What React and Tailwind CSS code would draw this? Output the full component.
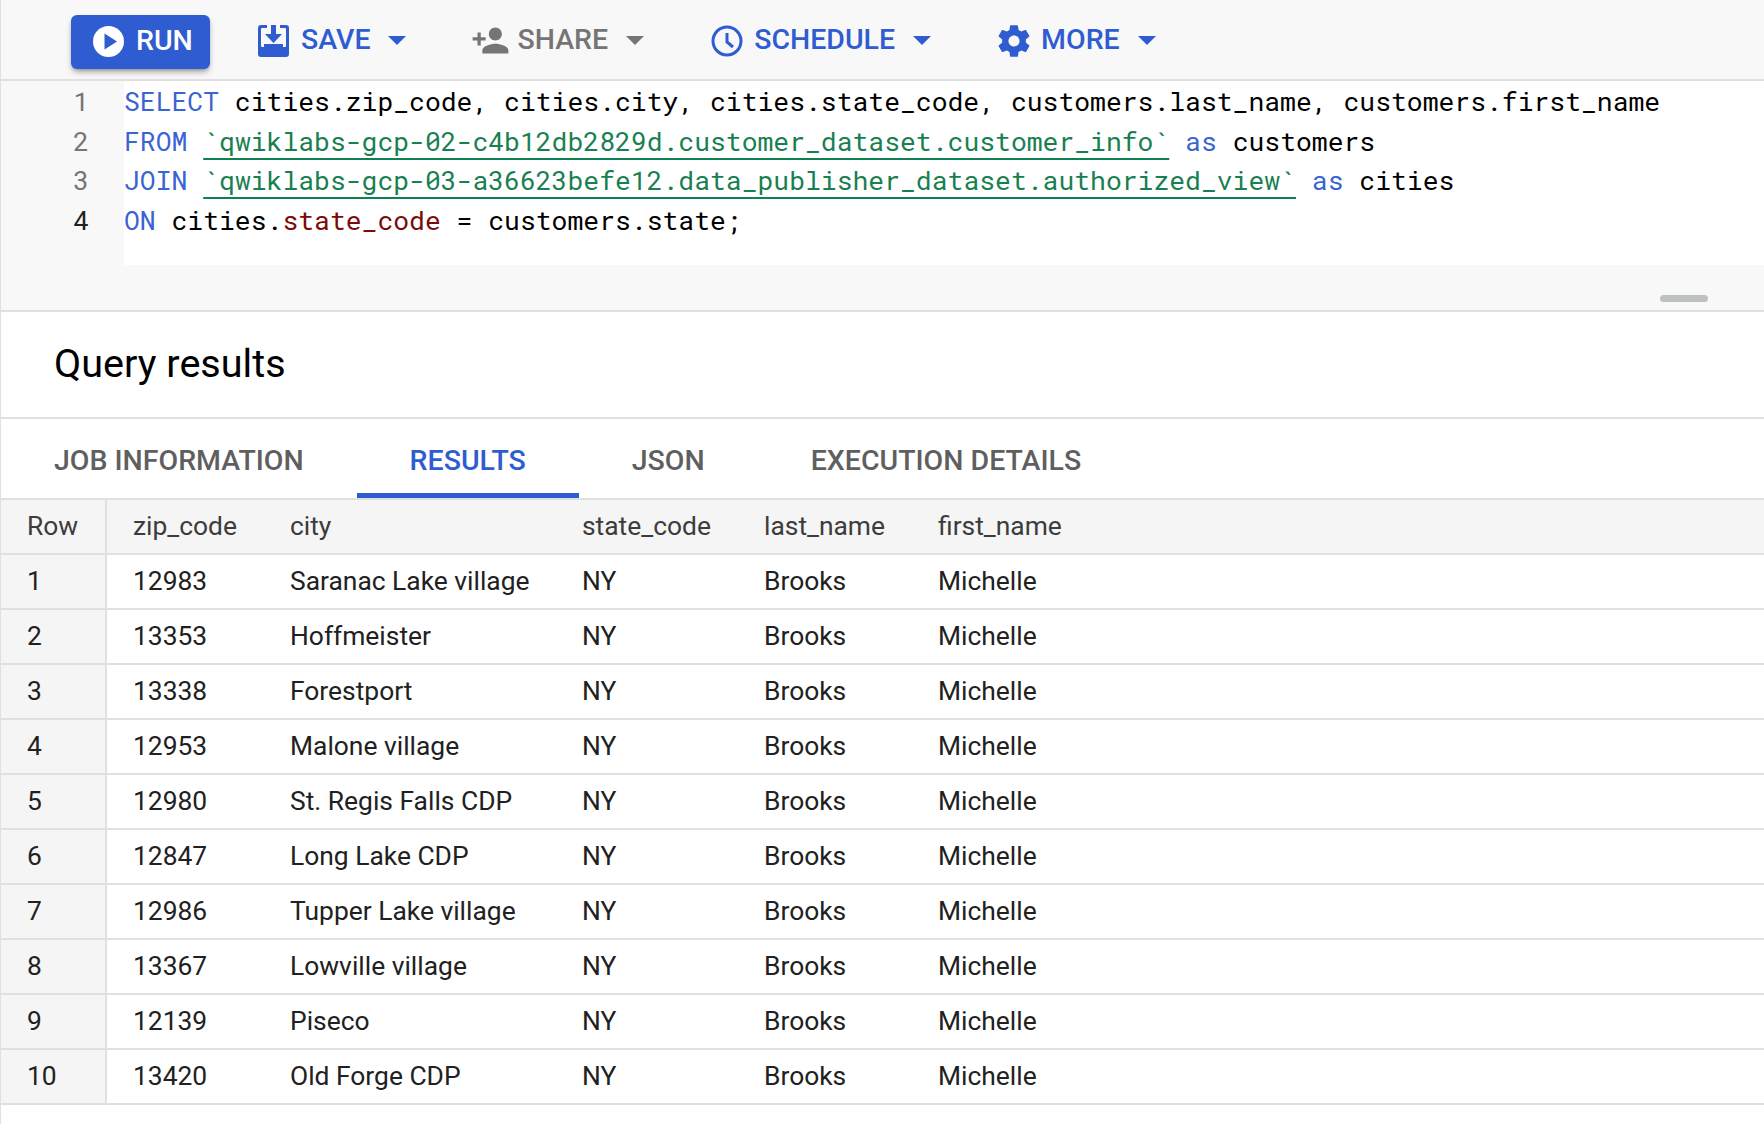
import React from "react";

const rows = [
  ["1", "12983", "Saranac Lake village"],
  ["2", "13353", "Hoffmeister"],
  ["3", "13338", "Forestport"],
  ["4", "12953", "Malone village"],
  ["5", "12980", "St. Regis Falls CDP"],
  ["6", "12847", "Long Lake CDP"],
  ["7", "12986", "Tupper Lake village"],
  ["8", "13367", "Lowville village"],
  ["9", "12139", "Piseco"],
  ["10", "13420", "Old Forge CDP"],
];

const gridCols = "grid grid-cols-[106px_156px_292px_182px_174px_1fr]";
const kw = "text-[#3a63d4]";
const ref = "text-[#188050] underline decoration-2 decoration-[#0f8050] underline-offset-[7px] [text-decoration-skip-ink:none]";

const Caret = ({ className }) => (
  <svg className={className} width="18" height="9" viewBox="0 0 18 9" fill="currentColor">
    <path d="M0 0h18L9 9z" />
  </svg>
);

const PlayIcon = () => (
  <svg width="31" height="31" viewBox="0 0 31 31">
    <circle cx="15.5" cy="15.5" r="15.5" fill="#fff" />
    <path d="M11.5 7.5v16l12.5-8z" fill="#2f5cd1" />
  </svg>
);

const SaveIcon = () => (
  <svg width="31" height="32" viewBox="0 0 31 32" fill="#2f5cd1">
    <path
      fillRule="evenodd"
      d="M3 0h6v3H4a1 1 0 0 0-1 1v17a1 1 0 0 0 1 1h23a1 1 0 0 0 1-1V4a1 1 0 0 0-1-1h-5V0h6a3 3 0 0 1 3 3v26a3 3 0 0 1-3 3H3a3 3 0 0 1-3-3V3a3 3 0 0 1 3-3z"
    />
    <path d="M13 0h5v9h6l-8.500 9L7 9h6zM6 19h19v3H6z" />
  </svg>
);

const ShareIcon = () => (
  <svg width="39" height="39" viewBox="0 0 24 24" fill="#757575">
    <path d="M15 12c2.210 0 4-1.790 4-4s-1.790-4-4-4-4 1.790-4 4 1.790 4 4 4zm-9-2V7H4v3H1v2h3v3h2v-3h3v-2H6zm9 4c-2.670 0-8 1.340-8 4v2h16v-2c0-2.660-5.330-4-8-4z" />
  </svg>
);

const ClockIcon = () => (
  <svg width="32" height="32" viewBox="0 0 32 32" fill="none" stroke="#2f5cd1">
    <circle cx="16" cy="16" r="14" strokeWidth="3" />
    <path d="M16 8v9l6 5" strokeWidth="3" />
  </svg>
);

const GearIcon = () => (
  <svg width="38" height="38" viewBox="0 0 24 24" fill="#2f5cd1">
    <path d="M19.430 12.980c.04-.32.07-.64.07-.98s-.03-.66-.07-.98l2.110-1.650c.19-.15.24-.42.12-.64l-2-3.460c-.12-.22-.39-.3-.61-.22l-2.490 1c-.52-.4-1.080-.73-1.690-.98l-.38-2.650C14.460 2.180 14.250 2 14 2h-4c-.25 0-.46.18-.49.42l-.38 2.650c-.61.25-1.170.59-1.690.98l-2.490-1c-.23-.09-.49 0-.61.22l-2 3.460c-.13.22-.07.49.12.64l2.110 1.650c-.04.32-.07.65-.07.98s.03.66.07.98l-2.110 1.650c-.19.15-.24.42-.12.64l2 3.460c.12.22.39.3.61.22l2.490-1c.52.4 1.080.73 1.690.98l.38 2.650c.03.24.24.42.49.42h4c.25 0 .46-.18.49-.42l.38-2.650c.61-.25 1.170-.59 1.690-.98l2.490 1c.23.09.49 0 .61-.22l2-3.460c.12-.22.07-.49-.12-.64l-2.110-1.650zM12 15.500c-1.930 0-3.500-1.570-3.500-3.500s1.570-3.500 3.500-3.500 3.500 1.570 3.500 3.500-1.570 3.500-3.500 3.500z" />
  </svg>
);

const Toolbar = () => (
  <div className="flex items-center h-[77px] pl-[70px] pt-[2px] bg-[#f8f8f8] border-b-2 border-[#e0e0e0] box-content text-[28.5px] font-medium">
    <div className="flex items-center gap-[12px] w-[139px] h-[54px] mt-[2px] pl-[22px] rounded-md bg-[#2f5cd1] text-white shadow-md shadow-black/30">
      <PlayIcon />
      <span>RUN</span>
    </div>
    <div className="flex items-center ml-[48px] text-[#2f5cd1]">
      <SaveIcon />
      <span className="ml-[12px]">SAVE</span>
      <Caret className="ml-[17px]" />
    </div>
    <div className="flex items-center ml-[65px] text-[#757575]">
      <ShareIcon />
      <span className="ml-[8px]">SHARE</span>
      <Caret className="ml-[18px]" />
    </div>
    <div className="flex items-center ml-[67px] text-[#2f5cd1]">
      <ClockIcon />
      <span className="ml-[11px]">SCHEDULE</span>
      <Caret className="ml-[18px]" />
    </div>
    <div className="flex items-center ml-[64px] text-[#2f5cd1]">
      <GearIcon />
      <span className="ml-[8px]">MORE</span>
      <Caret className="ml-[18px]" />
    </div>
  </div>
);

const Editor = () => (
  <div className="relative bg-[#f8f8f8] h-[229px] border-b-2 border-[#e0e0e0] box-content font-['Roboto_Mono','DejaVu_Sans_Mono',monospace] text-[26.4px] leading-[39.5px]">
    <div className="flex h-[184px]">
      <div className="w-[123px] pr-[35px] text-right text-[#757575]">
        <div>1</div>
        <div>2</div>
        <div>3</div>
        <div className="text-[#212121]">4</div>
      </div>
      <div className="flex-1 bg-white text-black whitespace-pre">
        <div>
          <span className={kw}>SELECT</span> cities.zip_code, cities.city, cities.state_code, customers.last_name, customers.first_name
        </div>
        <div>
          <span className={kw}>FROM</span> <span className={ref}>`qwiklabs-gcp-02-c4b12db2829d.customer_dataset.customer_info`</span> <span className={kw}>as</span> customers
        </div>
        <div>
          <span className={kw}>JOIN</span> <span className={ref}>`qwiklabs-gcp-03-a36623befe12.data_publisher_dataset.authorized_view`</span> <span className={kw}>as</span> cities
        </div>
        <div>
          <span className={kw}>ON</span> cities.<span className="text-[#7b0a0a]">state_code</span> = customers.state;
        </div>
      </div>
    </div>
    <div className="absolute right-[56px] top-[214px] w-[48px] h-[7px] rounded-full bg-[#bdc1c0]" />
  </div>
);

const Tabs = () => (
  <div className="flex h-[79px] border-b-2 border-[#e0e0e0] box-content text-[28.5px] font-medium text-[#5f5f5f]">
    <div className="flex items-center justify-center pl-[53px] pr-[53px] pt-[5px]">JOB INFORMATION</div>
    <div className="flex items-center justify-center w-[222px] pt-[12px] pb-[2px] text-[#2f5cd1] border-b-[5px] border-[#2f5cd1]">RESULTS</div>
    <div className="flex items-center justify-center w-[179px] pt-[5px]">JSON</div>
    <div className="flex items-center pl-[53px] pt-[5px]">EXECUTION DETAILS</div>
  </div>
);

const Results = () => (
  <div className="text-[26.4px] text-[#212121]">
    <div className={`${gridCols} h-[53px] items-center bg-[#f5f5f5] border-b-2 border-[#e0e0e0] box-content text-[#3c3c3c]`}>
      <div className="flex items-center h-full pl-[26px] border-r-2 border-[#e0e0e0]">Row</div>
      <div className="pl-[26px]">zip_code</div>
      <div className="pl-[27px]">city</div>
      <div className="pl-[27px]">state_code</div>
      <div className="pl-[27px]">last_name</div>
      <div className="pl-[27px]">first_name</div>
    </div>
    {rows.map((r) => (
      <div key={r[0]} className={`${gridCols} h-[53px] items-center border-b-2 border-[#e0e0e0] box-content`}>
        <div className="flex items-center h-full pl-[26px] bg-[#f5f5f5] border-r-2 border-[#e0e0e0]">{r[0]}</div>
        <div className="pl-[26px]">{r[1]}</div>
        <div className="pl-[27px]">{r[2]}</div>
        <div className="pl-[27px]">NY</div>
        <div className="pl-[27px]">Brooks</div>
        <div className="pl-[27px]">Michelle</div>
      </div>
    ))}
  </div>
);

export default function App() {
  return (
    <div className="w-[1764px] h-[1124px] overflow-hidden bg-white border-l border-[#e0e0e0] font-['Roboto',sans-serif]">
      <Toolbar />
      <Editor />
      <div className="flex items-center h-[103px] pl-[53px] pb-[2px] border-b-2 border-[#e0e0e0] box-content text-[39.6px] text-black">
        Query results
      </div>
      <Tabs />
      <Results />
    </div>
  );
}
